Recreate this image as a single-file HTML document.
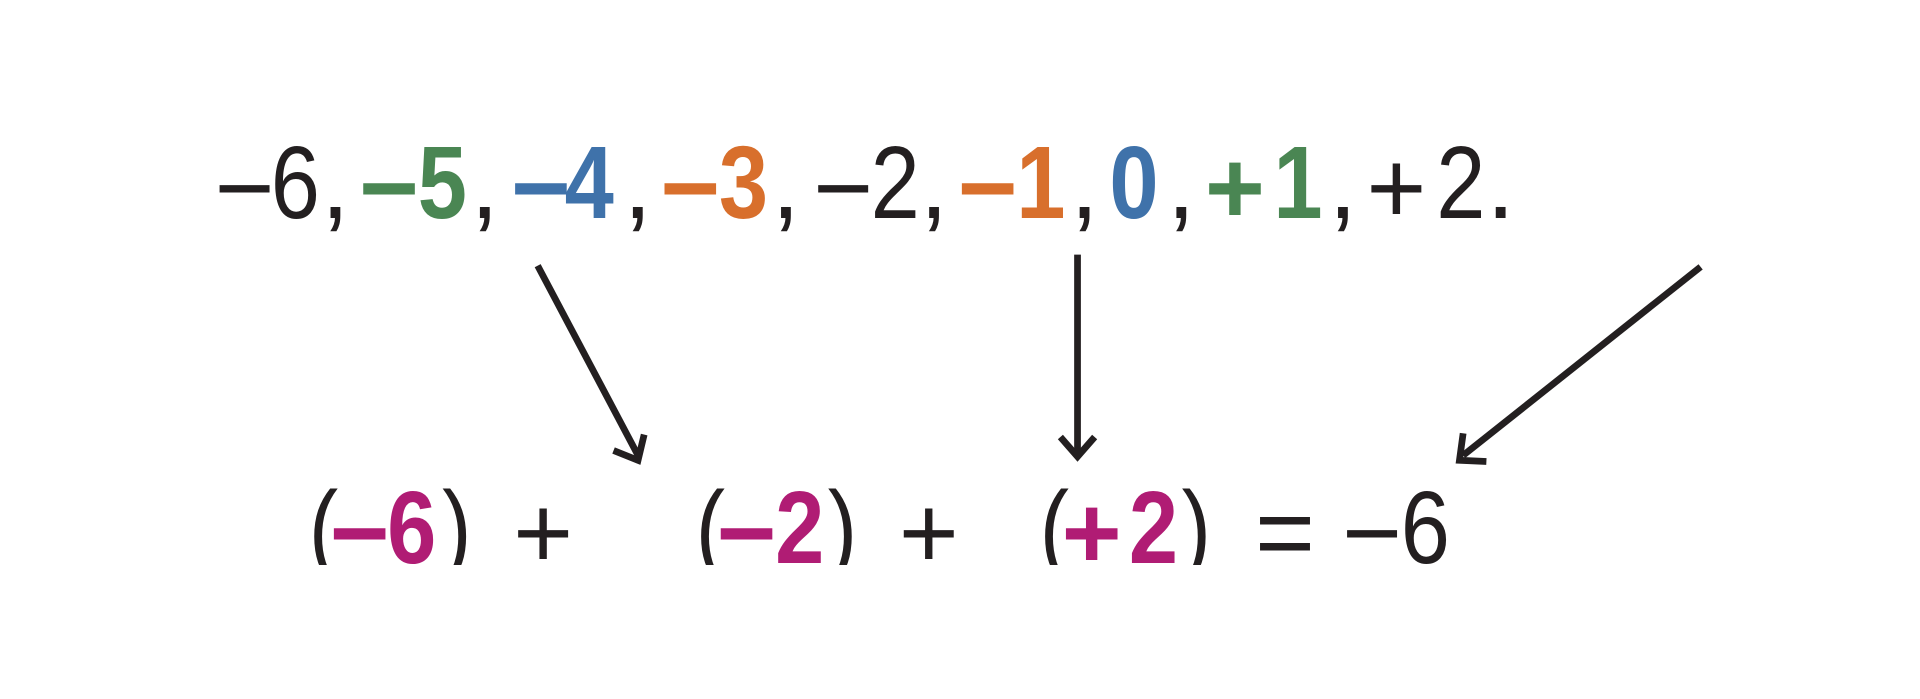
<!DOCTYPE html>
<html><head><meta charset="utf-8"><style>
html,body{margin:0;padding:0;background:#fff;width:1920px;height:699px;overflow:hidden}
svg{display:block}
text{font-family:"Liberation Sans",sans-serif;font-size:84px}
.d{transform-box:fill-box;transform-origin:left;transform:scaleX(0.86)}
.b{font-weight:bold}
.k{fill:#231f20}.g{fill:#4a8653}.u{fill:#3f72aa}.o{fill:#d86f2c}.m{fill:#b01c74}
</style></head><body>
<svg width="1920" height="699" viewBox="0 0 1568 571" xmlns="http://www.w3.org/2000/svg">
<defs><clipPath id="c"><rect x="0" y="300" width="1568" height="161.5"/></clipPath></defs>
<g>
<text class="k" x="175" y="182">−</text><text class="k d" x="221" y="178">6</text><text class="k" x="262" y="178">,</text>
<text class="g b" x="293" y="182">−</text><text class="g b d" x="341" y="178">5</text><text class="k" x="384" y="178">,</text>
<text class="u b" x="417" y="182">−</text><text class="u b d" x="461" y="178">4</text><text class="k" x="509" y="178">,</text>
<text class="o b" x="539" y="182">−</text><text class="o b d" x="587" y="178">3</text><text class="k" x="630" y="178">,</text>
<text class="k" x="664" y="182">−</text><text class="k d" x="711" y="178">2</text><text class="k" x="751" y="178">,</text>
<text class="o b" x="782" y="182">−</text><text class="o b d" x="830" y="178">1</text><text class="k" x="874" y="178">,</text>
<text class="u b d" x="906" y="178">0</text><text class="k" x="953" y="178">,</text>
<text class="g b" x="984" y="182">+</text><text class="g b d" x="1040" y="178">1</text><text class="k" x="1085" y="178">,</text>
<text class="k" x="1116" y="182">+</text><text class="k d" x="1173" y="178">2</text><text class="k" x="1214" y="178">.</text>
</g>
<g clip-path="url(#c)">
<text class="k d" x="252" y="460">(</text><text class="m b" x="269" y="464">−</text><text class="m b d" x="316" y="460">6</text><text class="k d" x="361" y="460">)</text>
<text class="k" x="419" y="464">+</text>
<text class="k d" x="568" y="460">(</text><text class="m b" x="585" y="464">−</text><text class="m b d" x="633" y="460">2</text><text class="k d" x="676" y="460">)</text>
<text class="k" x="734" y="464">+</text>
<text class="k d" x="849" y="460">(</text><text class="m b" x="867" y="464">+</text><text class="m b d" x="922" y="460">2</text><text class="k d" x="965" y="460">)</text>
<text class="k" x="1025" y="464">=</text><text class="k" x="1096" y="464">−</text><text class="k d" x="1144" y="460">6</text>
</g>
<g stroke="#231f20" stroke-width="5.5" fill="none">
<path d="M439 217 L521 372"/><path d="M501 368 L521 376 L526 355"/>
<path d="M880 208 L880 372"/><path d="M866 357 L880 373 L894 357"/>
<path d="M1389 218 L1195 372"/><path d="M1195 354 L1192 376 L1214 377"/>
</g>
</svg>
</body></html>
